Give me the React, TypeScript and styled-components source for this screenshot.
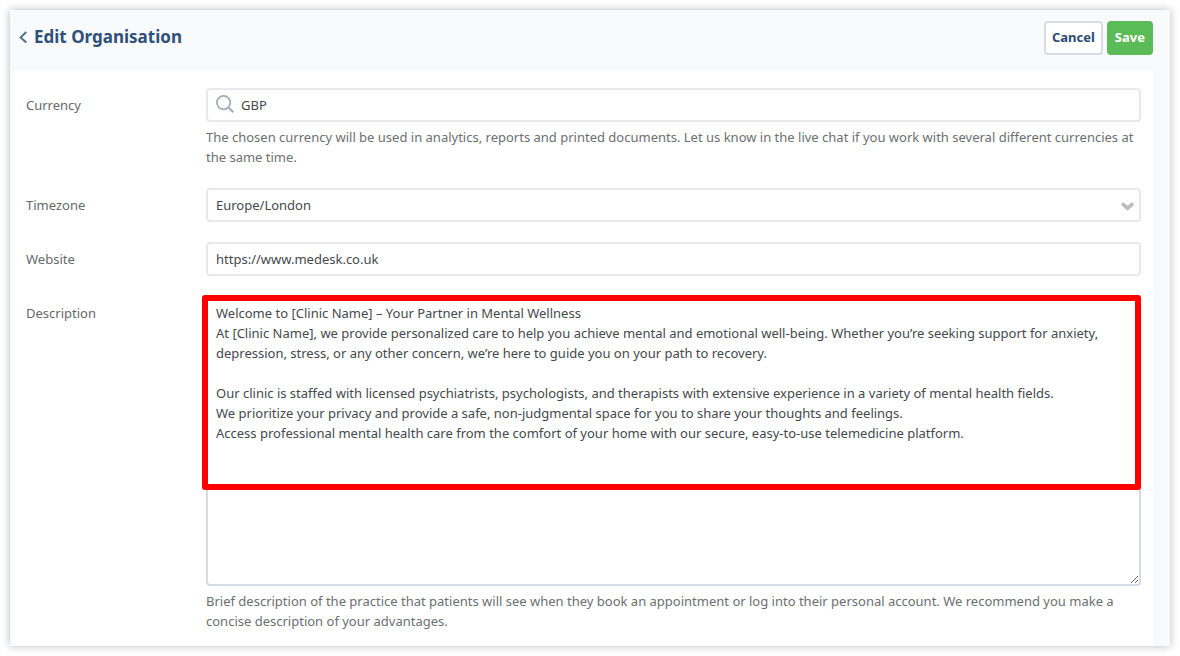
import React from "react";
import styled, { createGlobalStyle } from "styled-components";

const GlobalStyle = createGlobalStyle`
  *, *::before, *::after {
    box-sizing: border-box;
  }
  body {
    margin: 0;
    background: #ffffff;
    color: #45494d;
    font-family: "Noto Sans", "Open Sans", sans-serif;
    font-size: 13px;
    line-height: 20px;
  }
  button, input, select, textarea {
    font: inherit;
    color: inherit;
  }
`;

const Panel = styled.main`
  margin: 10px;
  padding: 0 17px 0 4px;
  background: #f8fafc;
  box-shadow: 0 0 8px rgba(0, 0, 0, 0.28);
`;

const Header = styled.header`
  display: flex;
  align-items: flex-start;
  justify-content: space-between;
  height: 61px;
  padding-top: 11px;
`;

const Heading = styled.div`
  display: flex;
  align-items: center;
  gap: 6px;
  height: 32px;
  padding-left: 5px;
`;

const BackLink = styled.a`
  display: flex;
  color: #54708f;
`;

const Title = styled.h1`
  margin: 0;
  color: #2f5078;
  font-size: 17px;
  font-weight: 700;
  line-height: 24px;
`;

const Actions = styled.div`
  display: flex;
  gap: 4px;
`;

const Button = styled.button<{ $primary?: boolean }>`
  height: 34px;
  padding: 0 6px 2px;
  border: 2px solid ${(p) => (p.$primary ? "#5bbb57" : "#d8dde4")};
  border-radius: 4px;
  background: ${(p) => (p.$primary ? "#5bbb57" : "#ffffff")};
  color: ${(p) => (p.$primary ? "#ffffff" : "#2b4a72")};
  font-weight: 700;
  cursor: pointer;
`;

const Form = styled.form`
  display: flex;
  flex-direction: column;
  gap: 20px;
  padding: 17px 12px 14px;
  background: #ffffff;
`;

const Row = styled.div`
  display: grid;
  grid-template-columns: 180px minmax(0, 1fr);
`;

const Label = styled.label`
  padding-top: 7px;
  color: #66696c;
`;

const Control = styled.div`
  position: relative;
  display: flex;
`;

const Input = styled.input<{ $withIcon?: boolean }>`
  width: 100%;
  height: 34px;
  padding: 0 8px 0 ${(p) => (p.$withIcon ? "33px" : "8px")};
  border: 2px solid #e7e9ed;
  border-radius: 4px;
  outline: none;
  background: #ffffff;
`;

const Select = styled.select`
  appearance: none;
  width: 100%;
  height: 34px;
  padding: 0 32px 0 8px;
  border: 2px solid #e7e9ed;
  border-radius: 4px;
  outline: none;
  background: #ffffff;
`;

const TextArea = styled.textarea`
  display: block;
  width: 100%;
  height: 290px;
  padding: 5px 8px;
  border: 2px solid #d6dce5;
  border-radius: 4px;
  outline: none;
  background: #ffffff;
  resize: vertical;
`;

const FieldIcon = styled.svg<{ $side: "left" | "right" }>`
  position: absolute;
  top: ${(p) => (p.$side === "left" ? "7px" : "14px")};
  ${(p) => (p.$side === "left" ? "left: 10px;" : "right: 6px;")}
  pointer-events: none;
`;

const Highlight = styled.div`
  position: absolute;
  top: -1px;
  right: 0;
  left: -4px;
  height: 195px;
  border: 6px solid #fe0000;
  border-radius: 3px;
  pointer-events: none;
`;

const Help = styled.p`
  margin: 0;
  padding: 5px 0 1px;
  color: #6c6f72;
`;

const description = `Welcome to [Clinic Name] – Your Partner in Mental Wellness
At [Clinic Name], we provide personalized care to help you achieve mental and emotional well-being. Whether you’re seeking support for anxiety, depression, stress, or any other concern, we’re here to guide you on your path to recovery.

Our clinic is staffed with licensed psychiatrists, psychologists, and therapists with extensive experience in a variety of mental health fields.
We prioritize your privacy and provide a safe, non-judgmental space for you to share your thoughts and feelings.
Access professional mental health care from the comfort of your home with our secure, easy-to-use telemedicine platform.`;

export default function App() {
  return (
    <>
      <GlobalStyle />
      <Panel>
        <Header>
          <Heading>
            <BackLink href="#" aria-label="Back">
              <svg width="9" height="12" viewBox="0 0 9 12" fill="none" stroke="currentColor" strokeWidth="2">
                <path d="M7.3 1 1.6 6.4l5.7 5.2" />
              </svg>
            </BackLink>
            <Title>Edit Organisation</Title>
          </Heading>
          <Actions>
            <Button type="button">Cancel</Button>
            <Button type="submit" form="organisation" $primary>
              Save
            </Button>
          </Actions>
        </Header>
        <Form id="organisation" onSubmit={(e) => e.preventDefault()}>
          <Row>
            <Label htmlFor="currency">Currency</Label>
            <div>
              <Control>
                <Input id="currency" defaultValue="GBP" $withIcon />
                <FieldIcon $side="left" width="18" height="18" viewBox="0 0 18 18" fill="none" stroke="#a3aebb" strokeWidth="1.8">
                  <circle cx="7.6" cy="7.6" r="6.7" />
                  <path d="m12.3 12.3 5 5" strokeWidth="2.1" />
                </FieldIcon>
              </Control>
              <Help>
                The chosen currency will be used in analytics, reports and printed documents. Let us know in the live
                chat if you work with several different currencies at the same time.
              </Help>
            </div>
          </Row>
          <Row>
            <Label htmlFor="timezone">Timezone</Label>
            <Control>
              <Select id="timezone" defaultValue="Europe/London">
                <option>Europe/London</option>
              </Select>
              <FieldIcon $side="right" width="14" height="9" viewBox="0 0 14 9" fill="none" stroke="#bcbcbc" strokeWidth="3.6" strokeLinecap="round">
                <path d="m2.2 2.4 4.4 4 4.4-4" />
              </FieldIcon>
            </Control>
          </Row>
          <Row>
            <Label htmlFor="website">Website</Label>
            <Control>
              <Input id="website" defaultValue="https://www.medesk.co.uk" />
            </Control>
          </Row>
          <Row>
            <Label htmlFor="description">Description</Label>
            <div>
              <Control>
                <TextArea id="description" defaultValue={description} spellCheck={false} />
                <Highlight />
              </Control>
              <Help>
                Brief description of the practice that patients will see when they book an appointment or log into their
                personal account. We recommend you make a concise description of your advantages.
              </Help>
            </div>
          </Row>
        </Form>
      </Panel>
    </>
  );
}
